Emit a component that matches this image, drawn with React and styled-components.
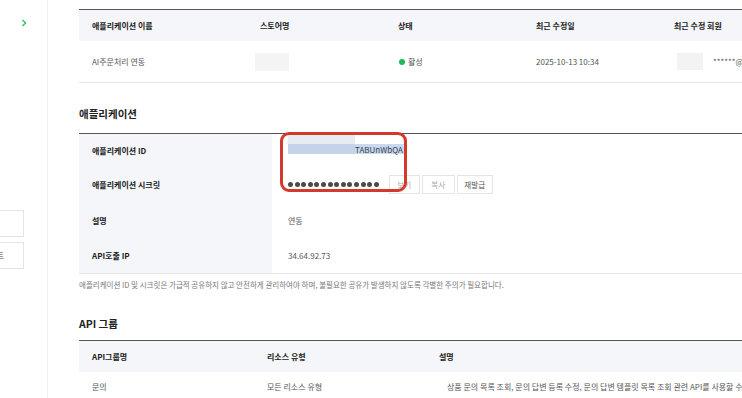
import React from "react";
import styled, { createGlobalStyle } from "styled-components";

const Global = createGlobalStyle`
  html, body { margin: 0; padding: 0; background: #fff; overflow: hidden; }
  body { font-family: "Noto Sans CJK KR", "Noto Sans", sans-serif; color: #333; }
  * { box-sizing: border-box; }
`;

const Page = styled.div`
  display: flex;
  width: 742px;
  height: 398px;
  overflow: hidden;
`;

const Sidebar = styled.aside`
  flex: 0 0 48px;
  border-right: 1px solid #f0f0f0;
  display: flex;
  flex-direction: column;
  overflow: hidden;
`;

const Chevron = styled.div`
  margin: 17px 0 0 19px;
  width: 10px;
  height: 12px;
  display: flex;
  align-items: center;
  justify-content: center;
`;

const SideItems = styled.div`
  margin-top: 181px;
  display: flex;
  flex-direction: column;
  gap: 5px;
`;

const SideItem = styled.div`
  margin-left: -40px;
  width: 64px;
  height: 27px;
  border: 1px solid #e4e4e4;
  background: #fff;
  display: flex;
  align-items: center;
  padding-left: 21px;
  font-size: 8px;
  color: #444;
  white-space: nowrap;
`;

const Main = styled.main`
  flex: 0 0 720px;
  padding: 9px 0 0 31px;
  display: flex;
  flex-direction: column;
`;

const Table = styled.div`
  border-top: 1.5px solid #555;
  display: flex;
  flex-direction: column;
  position: relative;
`;

const GridRow = styled.div`
  display: grid;
  grid-template-columns: ${(p) => p.$cols};
  height: ${(p) => p.$h}px;
  align-items: center;
  background: ${(p) => (p.$head ? "#f4f6f9" : "#fff")};
  border-bottom: ${(p) => (p.$head ? "none" : "1px solid #e6e6e6")};
`;

const Cell = styled.div`
  padding-left: ${(p) => p.$pl ?? 13}px;
  font-size: 8px;
  font-weight: ${(p) => (p.$bold ? 700 : 400)};
  color: ${(p) => (p.$bold ? "#222" : "#555")};
  white-space: nowrap;
  display: flex;
  align-items: center;
  gap: 2px;
  height: 100%;
`;

const Blur = styled.span`
  display: inline-block;
  width: ${(p) => p.$w}px;
  height: ${(p) => p.$h}px;
  background: ${(p) => p.$c || "#f4f4f4"};
`;

const StatusDot = styled.span`
  width: 6px;
  height: 6px;
  border-radius: 50%;
  background: #1db954;
  margin-right: 1px;
`;

const Heading = styled.h2`
  margin: ${(p) => p.$mt}px 0 ${(p) => p.$mb}px;
  font-size: 10.5px;
  line-height: 14px;
  font-weight: 700;
  color: #222;
`;

const InfoRow = styled.div`
  display: grid;
  grid-template-columns: 193px 1fr;
  height: ${(p) => p.$h}px;
  border-bottom: ${(p) => (p.$last ? "1px solid #e6e6e6" : "none")};
`;

const InfoLabel = styled.div`
  background: #f4f6f9;
  padding-left: 13px;
  display: flex;
  align-items: center;
  font-size: 8px;
  font-weight: 700;
  color: #222;
`;

const InfoValue = styled.div`
  padding-left: 16px;
  display: flex;
  align-items: center;
  font-size: 8px;
  color: #555;
  gap: 10px;
`;

const IdWrap = styled.div`
  position: relative;
  display: flex;
  margin-top: -2px;
`;

const IdTop = styled.span`
  position: absolute;
  left: 0;
  top: -9px;
  width: 67px;
  height: 9px;
  background: #e7ecf3;
`;

const Selected = styled.span`
  display: inline-flex;
  align-items: center;
  height: 10px;
  background: #c9d9f0;
  color: #3a3f48;
  font-size: 8px;
  padding-right: 1px;
`;

const Dots = styled.div`
  display: flex;
  gap: 1.6px;
`;

const Dot = styled.span`
  width: 5px;
  height: 5px;
  border-radius: 50%;
  background: #4a4a4a;
`;

const Buttons = styled.div`
  display: flex;
  gap: 2px;
`;

const Btn = styled.button`
  height: 19px;
  width: ${(p) => p.$w}px;
  border: 1px solid #e4e4e4;
  background: #fff;
  font-family: inherit;
  font-size: 7.5px;
  color: ${(p) => (p.$dim ? "#aaa" : "#555")};
  padding: 0;
`;

const RedMark = styled.div`
  position: absolute;
  left: 201px;
  top: -2px;
  width: 127px;
  height: 60px;
  border: 3px solid #d33a2c;
  border-radius: 9px;
  pointer-events: none;
`;

const Note = styled.p`
  margin: 6px 0 0;
  font-size: 7.5px;
  line-height: 10px;
  color: #777;
  white-space: nowrap;
`;

const Chev = () => (
  <svg width="6" height="8" viewBox="0 0 6 8">
    <path d="M1.5 1 L4.5 4 L1.5 7" fill="none" stroke="#1fbf5f" strokeWidth="1.3" />
  </svg>
);

const topCols = "163px 143px 138px 138px 1fr";
const apiCols = "175px 172px 1fr";

export default function App() {
  return (
    <>
      <Global />
      <Page>
        <Sidebar>
          <Chevron>
            <Chev />
          </Chevron>
          <SideItems>
            <SideItem />
            <SideItem>리포트</SideItem>
          </SideItems>
        </Sidebar>
        <Main>
          <Table>
            <GridRow $cols={topCols} $h={31} $head>
              <Cell $bold>애플리케이션 이름</Cell>
              <Cell $bold $pl={18}>스토어명</Cell>
              <Cell $bold>상태</Cell>
              <Cell $bold>최근 수정일</Cell>
              <Cell $bold>최근 수정 회원</Cell>
            </GridRow>
            <GridRow $cols={topCols} $h={42}>
              <Cell>AI주문처리 연동</Cell>
              <Cell><Blur $w={34} $h={18} /></Cell>
              <Cell $pl={14}><StatusDot />활성</Cell>
              <Cell>2025-10-13 10:34</Cell>
              <Cell $pl={16}><Blur $w={26} $h={17} $c="#f3f3f3" /><span style={{ marginLeft: 8 }}>******@gmail.com</span></Cell>
            </GridRow>
          </Table>

          <Heading $mt={24} $mb={12}>애플리케이션</Heading>
          <Table>
            <InfoRow $h={32}>
              <InfoLabel>애플리케이션 ID</InfoLabel>
              <InfoValue>
                <IdWrap>
                  <IdTop />
                  <Selected>
                    <Blur $w={67} $h={10} $c="#c4d3ea" />
                    TABUnWbQA
                  </Selected>
                </IdWrap>
              </InfoValue>
            </InfoRow>
            <InfoRow $h={36}>
              <InfoLabel>애플리케이션 시크릿</InfoLabel>
              <InfoValue>
                <Dots>
                  {Array.from({ length: 14 }).map((_, i) => (
                    <Dot key={i} />
                  ))}
                </Dots>
                <Buttons>
                  <Btn $w={31} $dim>보기</Btn>
                  <Btn $w={33} $dim>복사</Btn>
                  <Btn $w={36}>재발급</Btn>
                </Buttons>
              </InfoValue>
            </InfoRow>
            <InfoRow $h={36}>
              <InfoLabel>설명</InfoLabel>
              <InfoValue>연동</InfoValue>
            </InfoRow>
            <InfoRow $h={36} $last>
              <InfoLabel>API호출 IP</InfoLabel>
              <InfoValue>34.64.92.73</InfoValue>
            </InfoRow>
            <RedMark />
          </Table>
          <Note>
            애플리케이션 ID 및 시크릿은 가급적 공유하지 않고 안전하게 관리하여야 하며, 불필요한 공유가 발생하지 않도록 각별한 주의가 필요합니다.
          </Note>

          <Heading $mt={27} $mb={9}>API 그룹</Heading>
          <Table>
            <GridRow $cols={apiCols} $h={31} $head>
              <Cell $bold>API그룹명</Cell>
              <Cell $bold>리소스 유형</Cell>
              <Cell $bold>설명</Cell>
            </GridRow>
            <GridRow $cols={apiCols} $h={30}>
              <Cell>문의</Cell>
              <Cell>모든 리소스 유형</Cell>
              <Cell $pl={21}>상품 문의 목록 조회, 문의 답변 등록 수정, 문의 답변 템플릿 목록 조회 관련 API를 사용할 수 있습니다.</Cell>
            </GridRow>
          </Table>
        </Main>
      </Page>
    </>
  );
}
